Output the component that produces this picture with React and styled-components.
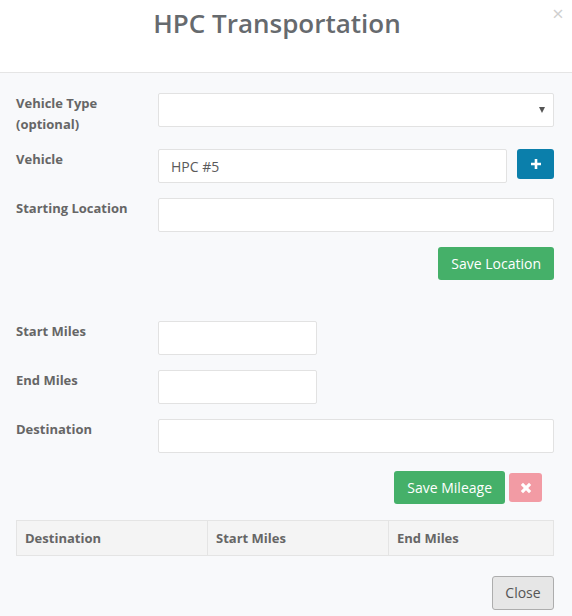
import React from "react";
import styled, { createGlobalStyle } from "styled-components";

const Global = createGlobalStyle`
  html, body { margin: 0; padding: 0; background: #f8f9fb; }
  body { font-family: "Open Sans", "Liberation Sans", sans-serif; color: #666; }
  * { box-sizing: border-box; }
`;

const Modal = styled.div`
  width: 572px;
  min-height: 616px;
  background: #f8f9fb;
  display: flex;
  flex-direction: column;
`;

const Header = styled.div`
  height: 73px;
  background: #fff;
  border-bottom: 1px solid #e5e5e5;
  display: flex;
  align-items: flex-start;
`;

const Title = styled.h4`
  flex: 1;
  margin: 0;
  padding-top: 5px;
  padding-left: 4px;
  text-align: center;
  font-size: 26px;
  font-weight: 600;
  line-height: 36px;
  color: #666a6e;
`;

const CloseX = styled.button`
  width: 16px;
  margin: 4px 6px 0 0;
  padding: 0;
  border: 0;
  background: none;
  font-family: "Open Sans", sans-serif;
  font-size: 20px;
  line-height: 20px;
  color: #cfcfcf;
  cursor: pointer;
`;

const Body = styled.div`
  padding: 20px 18px 0 16px;
`;

const Row = styled.div`
  display: flex;
  align-items: flex-start;
  margin-bottom: ${p => p.$mb ?? 15}px;
`;

const Label = styled.label`
  width: 142px;
  flex-shrink: 0;
  font-size: 13px;
  font-weight: 700;
  line-height: 20.5px;
  color: #666;
`;

const Field = styled.div`
  flex: 1;
  display: flex;
  gap: 10px;
  align-items: flex-start;
`;

const Input = styled.input`
  width: ${p => p.$w || "100%"};
  flex: ${p => (p.$w ? "none" : 1)};
  height: 34px;
  background: #fff;
  border: 1px solid #e2e2e2;
  border-radius: 2px;
  padding: 6px 12px;
  font-family: "Open Sans", sans-serif;
  font-size: 14px;
  color: #5a5a5a;
  outline: none;
`;

const SelectBox = styled.div`
  flex: 1;
  height: 34px;
  background: #fff;
  border: 1px solid #e2e2e2;
  border-radius: 2px;
  position: relative;
`;

const Caret = styled.span`
  position: absolute;
  right: 8px;
  top: 13px;
  width: 0;
  height: 0;
  border-left: 3px solid transparent;
  border-right: 3px solid transparent;
  border-top: 6px solid #555;
`;

const Actions = styled.div`
  display: flex;
  justify-content: flex-end;
  align-items: center;
  gap: 4px;
  padding-right: ${p => p.$pr || 0}px;
  margin-bottom: ${p => p.$mb || 0}px;
`;

const Button = styled.button`
  height: ${p => p.$h || 34}px;
  padding: 0 ${p => p.$px ?? 12}px;
  border-radius: 3px;
  border: 1px solid ${p => p.$border || "transparent"};
  background: ${p => p.$bg};
  color: ${p => p.$color || "#fff"};
  font-family: "Open Sans", sans-serif;
  font-size: 14px;
  line-height: 20px;
  display: inline-flex;
  align-items: center;
  justify-content: center;
  cursor: pointer;
`;

const IconSvg = styled.svg`
  display: block;
`;

const Table = styled.table`
  width: 100%;
  border-collapse: collapse;
  margin-bottom: 20px;
`;

const Th = styled.th`
  width: ${p => p.$w};
  height: 35px;
  text-align: left;
  padding: 0 8px;
  background: #f4f4f4;
  border: 1px solid #e4e4e4;
  font-size: 13px;
  font-weight: 700;
  color: #666;
`;

export default function App() {
  return (
    <>
      <Global />
      <Modal>
        <Header>
          <Title>HPC Transportation</Title>
          <CloseX aria-label="close">×</CloseX>
        </Header>
        <Body>
          <Row>
            <Label>Vehicle Type<br />(optional)</Label>
            <Field>
              <SelectBox>
                <Caret />
              </SelectBox>
            </Field>
          </Row>
          <Row>
            <Label>Vehicle</Label>
            <Field>
              <Input defaultValue="HPC #5" />
              <Button $bg="#0b7fab" $h={30} $px={0} style={{ width: 37 }}>
                <IconSvg width="10" height="10" viewBox="0 0 10 10">
                  <path d="M3.7 0h2.6v3.7H10v2.6H6.3V10H3.7V6.3H0V3.7h3.7z" fill="#fff" />
                </IconSvg>
              </Button>
            </Field>
          </Row>
          <Row>
            <Label>Starting Location</Label>
            <Field>
              <Input />
            </Field>
          </Row>
          <Actions $mb={41}>
            <Button $bg="#45b069" $h={33}>Save Location</Button>
          </Actions>
          <Row>
            <Label>Start Miles</Label>
            <Field>
              <Input $w="159px" />
            </Field>
          </Row>
          <Row>
            <Label>End Miles</Label>
            <Field>
              <Input $w="159px" />
            </Field>
          </Row>
          <Row $mb={18}>
            <Label>Destination</Label>
            <Field>
              <Input />
            </Field>
          </Row>
          <Actions $pr={12} $mb={16}>
            <Button $bg="#45b069" $h={33}>Save Mileage</Button>
            <Button $bg="#f29ba4" $h={29} $px={0} style={{ width: 33 }}>
              <IconSvg width="12" height="12" viewBox="0 0 12 12">
                <path d="M0.8 3L3 0.8 6 3.8 9 0.8 11.2 3 8.2 6 11.2 9 9 11.2 6 8.2 3 11.2 0.8 9 3.8 6z" fill="#fff" />
              </IconSvg>
            </Button>
          </Actions>
          <Table>
            <thead>
              <tr>
                <Th $w="191px">Destination</Th>
                <Th $w="181px">Start Miles</Th>
                <Th>End Miles</Th>
              </tr>
            </thead>
          </Table>
          <Actions>
            <Button $bg="#e6e6e6" $color="#555" $border="#adadad" $h={34} style={{ width: 62 }}>Close</Button>
          </Actions>
        </Body>
      </Modal>
    </>
  );
}
